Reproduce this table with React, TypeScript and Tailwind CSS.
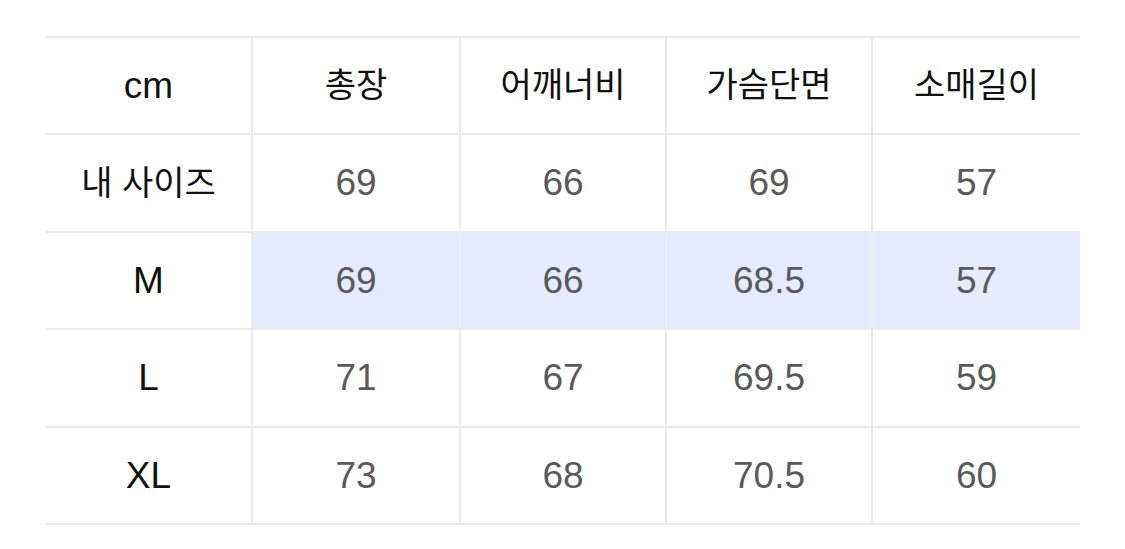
const cols = ["cm", "총장", "어깨너비", "가슴단면", "소매길이"];
const rows = [
  { label: "내 사이즈", values: ["69", "66", "69", "57"] },
  { label: "M", values: ["69", "66", "68.5", "57"], active: true },
  { label: "L", values: ["71", "67", "69.5", "59"] },
  { label: "XL", values: ["73", "68", "70.5", "60"] },
];

const grid = "grid grid-cols-[207px_208px_206px_206px_207px] h-[97.4px] border-b-2 border-[#ebebeb]";
const font = { fontFamily: '"Liberation Sans", "Noto Sans CJK KR", sans-serif' };

function isKorean(s: string) {
  return /[가-힣]/.test(s);
}

export default function App() {
  return (
    <div className="w-[1125px] h-[549px] bg-white overflow-hidden" style={font}>
      <div className="ml-[46px] mt-[36px] w-[1034px] border-t-2 border-[#ebebeb]">
        <div className={grid}>
          {cols.map((c, i) => (
            <div
              key={c}
              className={`flex items-center justify-center font-normal text-[#111] ${
                isKorean(c) ? "text-[34px]" : "text-[37px]"
              } ${i < cols.length - 1 ? "border-r-2 border-[#ebebeb]" : ""}`}
            >
              {c}
            </div>
          ))}
        </div>
        {rows.map((r) => (
          <div key={r.label} className={grid}>
            <div
              className={`flex items-center justify-center font-normal text-[#111] border-r-2 border-[#ebebeb] ${
                isKorean(r.label) ? "text-[34px]" : "text-[37px]"
              }`}
            >
              {r.label}
            </div>
            {r.values.map((v, i) => (
              <div
                key={i}
                className={`flex items-center justify-center text-[37px] text-[#5a5a5a] ${
                  r.active ? "bg-[#e5ebfc]" : ""
                } ${
                  i < r.values.length - 1
                    ? r.active
                      ? "border-r-2 border-[#e9edf9]"
                      : "border-r-2 border-[#ebebeb]"
                    : ""
                }`}
              >
                {v}
              </div>
            ))}
          </div>
        ))}
      </div>
    </div>
  );
}
